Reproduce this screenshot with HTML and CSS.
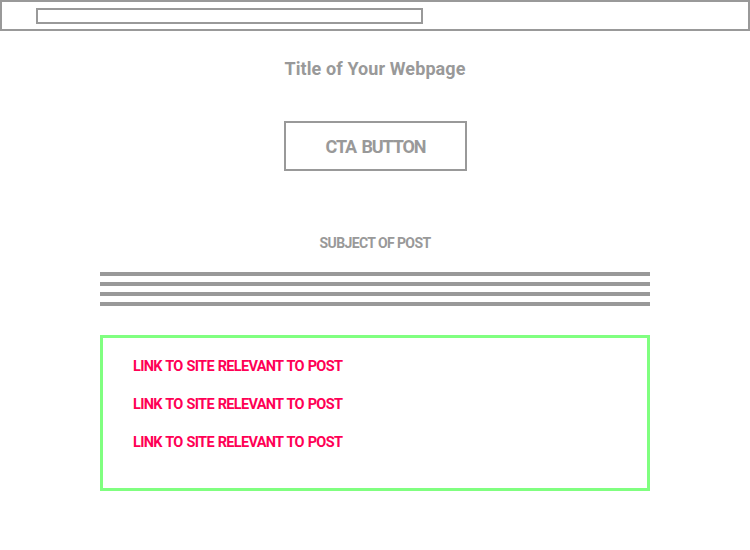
FILE: index.html
```html
<!DOCTYPE html>
<html>
<head>
<meta charset="utf-8">
<link rel="stylesheet" href="styles.css">
</head>
<body>
<header class="browser-bar">
  <div class="url-field"></div>
</header>
<main class="page">
  <h1 class="title">Title of Your Webpage</h1>
  <a class="cta" href="#">CTA BUTTON</a>
  <h2 class="subject">SUBJECT OF POST</h2>
  <div class="text-lines">
    <span class="line"></span>
    <span class="line"></span>
    <span class="line"></span>
    <span class="line"></span>
  </div>
  <section class="links">
    <a class="link" href="#">LINK TO SITE RELEVANT TO POST</a>
    <a class="link" href="#">LINK TO SITE RELEVANT TO POST</a>
    <a class="link" href="#">LINK TO SITE RELEVANT TO POST</a>
  </section>
</main>
</body>
</html>
```
FILE: styles.css
```css
html, body {
  margin: 0;
  padding: 0;
  background: #fff;
}
body {
  width: 750px;
  height: 550px;
  font-family: Roboto, "Liberation Sans", sans-serif;
  color: #999;
}
.browser-bar {
  box-sizing: border-box;
  height: 31px;
  border: 2px solid #999;
  padding: 6px 0 0 34px;
}
.url-field {
  box-sizing: border-box;
  width: 387px;
  height: 16px;
  border: 2px solid #999;
}
.page {
  display: flex;
  flex-direction: column;
  align-items: center;
}
.title {
  margin: 27px 0 0;
  font-size: 18px;
  line-height: 22px;
  font-weight: bold;
  letter-spacing: 0.1px;
  color: #999;
}
.cta {
  box-sizing: border-box;
  margin-top: 41px;
  margin-left: 1px;
  width: 183px;
  height: 50px;
  border: 2px solid #999;
  display: flex;
  align-items: center;
  justify-content: center;
  font-size: 18px;
  font-weight: bold;
  letter-spacing: -1.1px;
  word-spacing: 2px;
  color: #999;
  text-decoration: none;
}
.subject {
  margin: 64px 0 0;
  font-size: 14px;
  line-height: 16px;
  font-weight: bold;
  letter-spacing: -0.6px;
  color: #999;
}
.text-lines {
  margin-top: 21px;
  width: 550px;
  display: flex;
  flex-direction: column;
  gap: 6px;
}
.line {
  display: block;
  height: 4px;
  background: #999;
}
.links {
  box-sizing: border-box;
  margin-top: 29px;
  width: 550px;
  height: 156px;
  border: 3px solid #80ff80;
  padding: 20px 30px;
  display: flex;
  flex-direction: column;
  gap: 20px;
}
.link {
  font-size: 14.5px;
  line-height: 18px;
  font-weight: bold;
  letter-spacing: -0.7px;
  word-spacing: 1px;
  color: #ff0055;
  text-decoration: none;
}
```
